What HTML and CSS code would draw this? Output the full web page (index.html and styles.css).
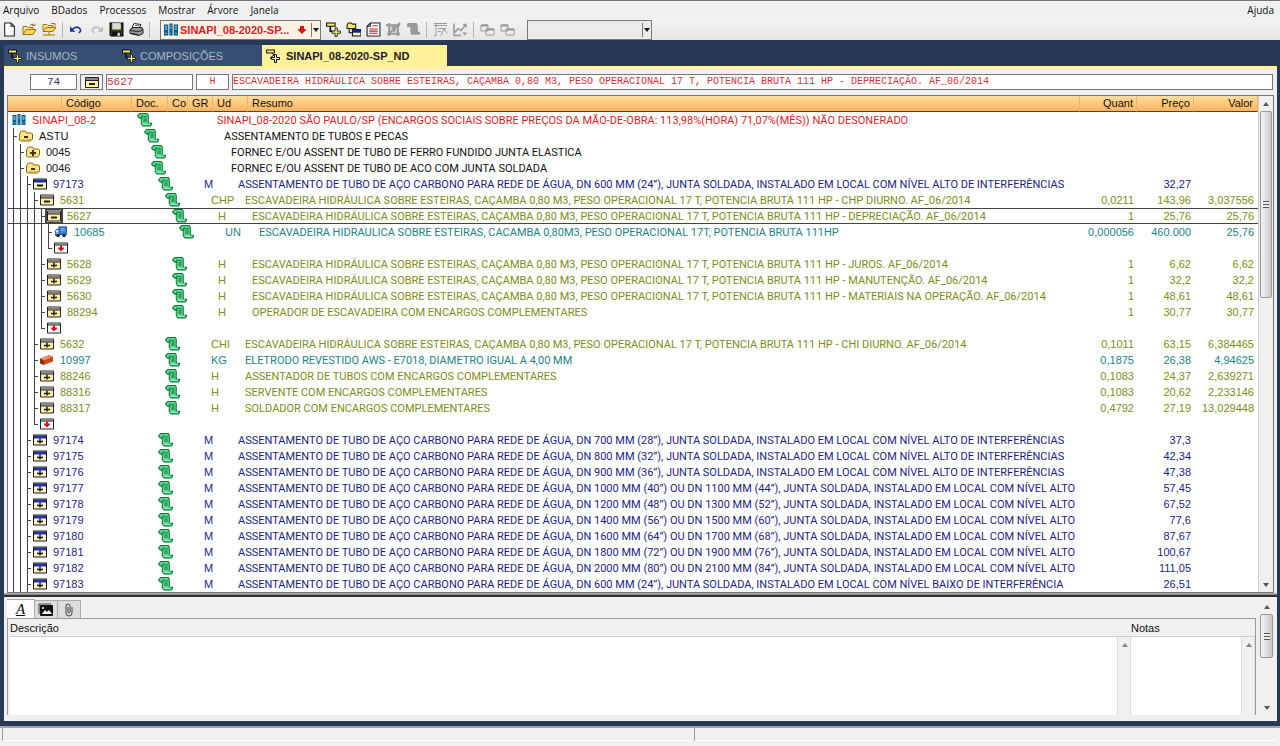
FILE: index.html
```html
<!DOCTYPE html>
<html lang="pt-BR">
<head>
<meta charset="utf-8">
<title>SINAPI_08-2020-SP_ND</title>
<link rel="stylesheet" href="styles.css">
</head>
<body>
<svg class="defs" aria-hidden="true">
  <symbol id="i-doc" viewBox="0 0 14 13"><path d="M2.500.5h7l1 1.500v7.500h3v1l-1 1.500H5.500l-1.500-2V4.500h-2L.5 2.500z" fill="#58d68c" stroke="#0f7a40"/><path d="M3 4.500h1.500L5 2" stroke="#0f7a40" fill="none"/><path d="M6 3.500h3M6 5.500h3M6 7.500h3" stroke="#0c6a36" fill="none"/><path d="M5 10.500h7" stroke="#a6f0c4" fill="none"/></symbol>
  <symbol id="i-books" viewBox="0 0 13 12"><path d="M0 1h4v10H0zM5 0h3v11H5zM9 1h4v10H9z" fill="#0b5f8c"/><path d="M1 3h2M1 5h2M6 2h1M6 4h1M10 3h2M10 5h2" stroke="#bfeaff"/><path d="M1 9h2M6 9h1M10 9h2" stroke="#4fc3f0"/></symbol>
  <symbol id="i-folder-minus" viewBox="0 0 14 12"><path d="M.5 4l2-3h4l1 2h5l1 1v5l-2 2h-10l-1-1z" fill="#ffe58a" stroke="#8a6a10"/><path d="M2 10h9l1-1" stroke="#c99b2c" fill="none"/><path d="M5 7h4" stroke="#4a2d00" stroke-width="2"/></symbol>
  <symbol id="i-folder-plus" viewBox="0 0 14 12"><path d="M.5 4l2-3h4l1 2h5l1 1v5l-2 2h-10l-1-1z" fill="#ffe58a" stroke="#8a6a10"/><path d="M4 7h6M7 4v6" stroke="#4a2d00" stroke-width="2"/></symbol>
  <symbol id="i-navy-minus" viewBox="0 0 14 11"><path d="M.5.5h13v10H.5z" fill="#fff3c4" stroke="#111"/><path d="M1 1h12v3H1z" fill="#1c2fa0"/><path d="M4 7h6" stroke="#111" stroke-width="2"/></symbol>
  <symbol id="i-navy-plus" viewBox="0 0 14 11"><path d="M.5.5h13v10H.5z" fill="#fff3c4" stroke="#111"/><path d="M1 1h12v3H1z" fill="#1c2fa0"/><path d="M4 7h6M7 4v5" stroke="#111" stroke-width="1.500"/></symbol>
  <symbol id="i-box-minus" viewBox="0 0 14 11"><path d="M.5.5h13v10H.5z" fill="#fff0a8" stroke="#222"/><path d="M1 1h12v2H1z" fill="#888"/><path d="M1 3.500h12" stroke="#222"/><path d="M4 7h6" stroke="#222" stroke-width="2"/></symbol>
  <symbol id="i-box-plus" viewBox="0 0 14 11"><path d="M.5.5h13v10H.5z" fill="#fff0a8" stroke="#222"/><path d="M1 1h12v2H1z" fill="#888"/><path d="M1 3.500h12" stroke="#222"/><path d="M4 7h6M7 4v5" stroke="#222" stroke-width="1.500"/></symbol>
  <symbol id="i-end" viewBox="0 0 14 11"><path d="M.5.5h13v10H.5z" fill="#fff" stroke="#222"/><path d="M1 1h12v1H1z" fill="#888"/><path d="M1 2.500h12" stroke="#222"/><path d="M4 5h2V3h2v2h2v1L7 9 4 6z" fill="#e01010"/></symbol>
  <symbol id="i-truck" viewBox="0 0 15 14"><path d="M5 1h9v9H5z" fill="#3c7fd6" stroke="#1c468c"/><path d="M1 6l1-2h4v7H1z" fill="#74aef2" stroke="#1c468c"/><path d="M2 5h2v2H2z" fill="#e6f3ff"/><circle cx="4" cy="11" r="2" fill="#222"/><circle cx="11" cy="11" r="2" fill="#222"/><path d="M7 3h5M7 5h5" stroke="#8ebdf5"/></symbol>
  <symbol id="i-brick" viewBox="0 0 15 13"><path d="M0 5l10-4 4 2v5L4 12l-4-2z" fill="#c94a22"/><path d="M0 5l10-4 4 2-10 4z" fill="#f08a60"/><path d="M0 5l4 2v5l-4-2z" fill="#8c2b10"/></symbol>
  <symbol id="i-treeplus" viewBox="0 0 14 14"><path d="M.5 1h8v3h-8z" fill="#f8e860" stroke="#111"/><path d="M4 4v4.500h2" stroke="#111" fill="none" stroke-width="1.500"/><path d="M8.500 5.500h2v3h3v2h-3v3h-2v-3h-3v-2h3z" fill="#f8ee70" stroke="#111" stroke-width=".8"/></symbol>
  <symbol id="i-treeplus2" viewBox="0 0 14 14"><path d="M.5 1h8v3h-8z" fill="#f8e860" stroke="#111"/><path d="M6 4l2 2-4 3h3" stroke="#111" fill="none"/><path d="M8.500 5.500h2v3h3v2h-3v3h-2v-3h-3v-2h3z" fill="#fff7b0" stroke="#111"/></symbol>
  <symbol id="i-new" viewBox="0 0 14 14"><path d="M2.500 1h6l3 3v9h-9z" fill="#fff" stroke="#222"/><path d="M8.500 1v3h3" fill="none" stroke="#222"/></symbol>
  <symbol id="i-open" viewBox="0 0 15 14"><path d="M1 12V4h4l1 1h5v2" fill="#ffe68c" stroke="#9a7415"/><path d="M1 12l3-5h10l-3 5z" fill="#ffd75a" stroke="#9a7415"/><path d="M8 3q2-3 4 0m1-2v2h-3" fill="none" stroke="#9a7415"/></symbol>
  <symbol id="i-opentree" viewBox="0 0 15 14"><path d="M1 8V2h4l1 1h5v2" fill="#ffe68c" stroke="#9a7415"/><path d="M1 9l3-4h10l-3 4z" fill="#ffd75a" stroke="#9a7415"/><path d="M9 1h4v3" fill="none" stroke="#d0622c"/><path d="M7 9v3M1 12.500h12" stroke="#c49a20" stroke-width="1.500"/></symbol>
  <symbol id="i-undo" viewBox="0 0 14 14"><path d="M3 7q4-4 7-1 2 3-1 4" fill="none" stroke="#1d2e9c" stroke-width="1.500"/><path d="M1 4v5h5z" fill="#1d2e9c"/></symbol>
  <symbol id="i-redo" viewBox="0 0 14 14"><path d="M11 7Q7 3 4 6q-2 3 1 4" fill="none" stroke="#bbb" stroke-width="1.500"/><path d="M13 4v5H8z" fill="#bbb"/></symbol>
  <symbol id="i-save" viewBox="0 0 14 14"><path d="M1 1h12v12H2l-1-1z" fill="#333a1c" stroke="#000"/><path d="M3 1h8v6H3z" fill="#dcdcd4"/><path d="M3 9h8v4H3z" fill="#111"/><path d="M8 10h2v3H8z" fill="#eee"/></symbol>
  <symbol id="i-print" viewBox="0 0 15 14"><path d="M5 1l7 1-2 4-7-1z" fill="#fff" stroke="#222"/><path d="M1 7l3-2h9l1 2v4l-4 2-9-2z" fill="#9a9a9a" stroke="#222"/><path d="M1 8l9 1 4-2M3 11l6 1" stroke="#222" fill="none"/><path d="M6 3h4" stroke="#666"/></symbol>
  <symbol id="i-folders" viewBox="0 0 14 14"><path d="M1 3l1-2h3l1 1h3v4H1z" fill="#f8e860" stroke="#222"/><path d="M3 6v4h3M6 7h8v6H6z" fill="#fff3a8" stroke="#111"/><path d="M6 7h8v3H6z" fill="#12238c"/></symbol>
  <symbol id="i-sheet" viewBox="0 0 14 14"><path d="M4 1h9v12H1V4z" fill="#fff" stroke="#222"/><path d="M4 1v3H1" fill="none" stroke="#222"/><path d="M6 3.500h5M3 6.500h8M3 8.500h8M3 10.500h8" stroke="#c02030"/></symbol>
  <symbol id="i-crop" viewBox="0 0 14 14"><path d="M0 3h13M3 1v12M1 11h12M11 3v10" stroke="#999" stroke-width="2"/><path d="M3 11L13 1M5 5h3v4" stroke="#999" stroke-width="2" fill="none"/></symbol>
  <symbol id="i-scrollg" viewBox="0 0 14 14"><path d="M2 1h8l1 2v6h2v3H5l-1-2V5H1V2z" fill="#999"/></symbol>
  <symbol id="i-list" viewBox="0 0 15 14"><path d="M1 1h13M1 3h13M3 1v12M1 13h2M5 6h8M5 9h3M8 13l3-7 3 5" stroke="#999" fill="none"/></symbol>
  <symbol id="i-chart" viewBox="0 0 15 14"><path d="M1 1v12h7M2 10l3-4 3 2 5-6m-3 0h3v3" stroke="#999" stroke-width="1.500" fill="none"/><path d="M9 10h5l-2 3z" fill="#999"/></symbol>
  <symbol id="i-wins" viewBox="0 0 15 14"><path d="M1 2.500h7v6H1zM6 6.500h8v6H6z" fill="#eee" stroke="#999"/><path d="M1 3h7M6 7h8" stroke="#999" stroke-width="2"/></symbol>
  <symbol id="i-down" viewBox="0 0 8 8"><path d="M1 2h6L4 6z" fill="#111"/></symbol>
  <symbol id="i-up" viewBox="0 0 8 8"><path d="M1 6h6L4 2z" fill="#555"/></symbol>
  <symbol id="i-dn" viewBox="0 0 8 8"><path d="M1 2h6L4 6z" fill="#555"/></symbol>
  <symbol id="i-redarrow" viewBox="0 0 8 10"><path d="M2 1h4v3h2v1L4 9 0 5V4h2z" fill="#d81818"/></symbol>
  <symbol id="i-pic" viewBox="0 0 16 14"><path d="M1 11V1h12" fill="none" stroke="#444"/><rect x="2" y="2" width="13" height="11" rx="1" fill="#111"/><path d="M4 11l3-4 2 2 2-2 3 4z" fill="#fff"/><circle cx="5" cy="5" r="1" fill="#fff"/></symbol>
  <symbol id="i-clip" viewBox="0 0 10 14"><path d="M8 4v6q0 3-3 3t-3-3V3q0-2 2-2t2 2v6q0 1-1 1T4 9V4" fill="none" stroke="#444"/></symbol>
</svg>

<nav class="menubar">
  <button>Arquivo</button><button>BDados</button><button>Processos</button><button>Mostrar</button><button>Árvore</button><button>Janela</button>
  <button class="help">Ajuda</button>
</nav>

<div class="toolbar">
  <button aria-label="Novo"><svg><use href="#i-new"/></svg></button>
  <button aria-label="Abrir"><svg><use href="#i-open"/></svg></button>
  <button aria-label="Abrir base"><svg><use href="#i-opentree"/></svg></button>
  <i class="sep"></i>
  <button aria-label="Desfazer"><svg><use href="#i-undo"/></svg></button>
  <button aria-label="Refazer"><svg><use href="#i-redo"/></svg></button>
  <button aria-label="Salvar"><svg><use href="#i-save"/></svg></button>
  <button aria-label="Imprimir"><svg><use href="#i-print"/></svg></button>
  <i class="sep"></i>
  <div class="combo combo-db">
    <svg><use href="#i-books"/></svg>
    <select aria-label="Base de dados"><option>SINAPI_08-2020-SP...</option></select>
    <svg class="redmark"><use href="#i-redarrow"/></svg>
    <span class="caret"><svg><use href="#i-down"/></svg></span>
  </div>
  <button aria-label="Inserir"><svg><use href="#i-treeplus"/></svg></button>
  <button aria-label="Conceitos"><svg><use href="#i-folders"/></svg></button>
  <button aria-label="Folha"><svg><use href="#i-sheet"/></svg></button>
  <button aria-label="Medição"><svg><use href="#i-crop"/></svg></button>
  <button aria-label="Texto"><svg><use href="#i-scrollg"/></svg></button>
  <i class="sep"></i>
  <button aria-label="Lista"><svg><use href="#i-list"/></svg></button>
  <button aria-label="Gráfico"><svg><use href="#i-chart"/></svg></button>
  <i class="sep"></i>
  <button aria-label="Janela anterior"><svg><use href="#i-wins"/></svg></button>
  <button aria-label="Janela seguinte"><svg><use href="#i-wins"/></svg></button>
  <div class="combo combo-view">
    <select aria-label="Vista"><option></option></select>
    <span class="caret"><svg><use href="#i-down"/></svg></span>
  </div>
</div>

<main class="frame">
  <div class="tabs">
    <button class="tab tab-a"><svg><use href="#i-treeplus"/></svg>INSUMOS</button>
    <button class="tab tab-b"><svg><use href="#i-treeplus"/></svg>COMPOSIÇÕES</button>
    <button class="tab tab-on"><svg><use href="#i-treeplus2"/></svg>SINAPI_08-2020-SP_ND</button>
  </div>

  <div class="panel">
    <div class="fields">
      <input class="f-num" aria-label="Linha" value="74">
      <button class="f-btn" aria-label="Recolher"><svg><use href="#i-box-minus"/></svg></button>
      <input class="f-code" aria-label="Código" value="5627">
      <input class="f-unit" aria-label="Unidade" value="H">
      <input class="f-text" aria-label="Resumo" value="ESCAVADEIRA HIDRÁULICA SOBRE ESTEIRAS, CAÇAMBA 0,80 M3, PESO OPERACIONAL 17 T, POTENCIA BRUTA 111 HP - DEPRECIAÇÃO. AF_06/2014">
    </div>

    <div class="grid">
      <div class="grid-view">
      <table>
        <colgroup><col class="c1"><col class="c2"><col class="c3"><col class="c4"><col class="c5"><col class="c6"><col><col class="c8"><col class="c9"><col class="c10"></colgroup>
        <thead><tr><th></th><th>Código</th><th>Doc.</th><th>Co</th><th>GR</th><th>Ud</th><th>Resumo</th><th class="num">Quant</th><th class="num">Preço</th><th class="num">Valor</th></tr></thead>
        <tbody>
<tr class="d0 red"><td colspan="2"><div class="tree"><svg><use href="#i-books"/></svg>SINAPI_08-2</div></td><td><svg class="doc"><use href="#i-doc"/></svg></td><td colspan="2"></td><td colspan="2" class="res">SINAPI_08-2020 SÃO PAULO/SP (ENCARGOS SOCIAIS SOBRE PREÇOS DA MÃO-DE-OBRA: 113,98%(HORA) 71,07%(MÊS)) NÃO DESONERADO</td><td></td><td></td><td></td></tr>
<tr class="d1"><td colspan="2"><div class="tree"><i class="t"></i><svg><use href="#i-folder-minus"/></svg>ASTU</div></td><td><svg class="doc"><use href="#i-doc"/></svg></td><td colspan="2"></td><td colspan="2" class="res">ASSENTAMENTO DE TUBOS E PECAS</td><td></td><td></td><td></td></tr>
<tr class="d2"><td colspan="2"><div class="tree"><i></i><i class="t"></i><svg><use href="#i-folder-plus"/></svg>0045</div></td><td><svg class="doc"><use href="#i-doc"/></svg></td><td colspan="2"></td><td colspan="2" class="res">FORNEC E/OU ASSENT DE TUBO DE FERRO FUNDIDO JUNTA ELASTICA</td><td></td><td></td><td></td></tr>
<tr class="d2"><td colspan="2"><div class="tree"><i></i><i class="t"></i><svg><use href="#i-folder-minus"/></svg>0046</div></td><td><svg class="doc"><use href="#i-doc"/></svg></td><td colspan="2"></td><td colspan="2" class="res">FORNEC E/OU ASSENT DE TUBO DE ACO COM JUNTA SOLDADA</td><td></td><td></td><td></td></tr>
<tr class="d3 navy"><td colspan="2"><div class="tree"><i></i><i></i><i class="t"></i><svg><use href="#i-navy-minus"/></svg>97173</div></td><td><svg class="doc"><use href="#i-doc"/></svg></td><td colspan="2"><span class="ud">M</span></td><td colspan="2" class="res">ASSENTAMENTO DE TUBO DE AÇO CARBONO PARA REDE DE ÁGUA, DN 600 MM (24”), JUNTA SOLDADA, INSTALADO EM LOCAL COM NÍVEL ALTO DE INTERFERÊNCIAS</td><td></td><td class="num">32,27</td><td></td></tr>
<tr class="d4 olive"><td colspan="2"><div class="tree"><i></i><i></i><i></i><i class="t"></i><svg><use href="#i-box-minus"/></svg>5631</div></td><td><svg class="doc"><use href="#i-doc"/></svg></td><td colspan="2"><span class="ud">CHP</span></td><td colspan="2" class="res">ESCAVADEIRA HIDRÁULICA SOBRE ESTEIRAS, CAÇAMBA 0,80 M3, PESO OPERACIONAL 17 T, POTENCIA BRUTA 111 HP - CHP DIURNO. AF_06/2014</td><td class="num">0,0211</td><td class="num">143,96</td><td class="num">3,037556</td></tr>
<tr class="d5 olive current"><td colspan="2"><div class="tree"><i></i><i></i><i></i><i></i><i class="t"></i><svg><use href="#i-box-minus"/></svg>5627</div></td><td><svg class="doc"><use href="#i-doc"/></svg></td><td colspan="2"><span class="ud">H</span></td><td colspan="2" class="res">ESCAVADEIRA HIDRÁULICA SOBRE ESTEIRAS, CAÇAMBA 0,80 M3, PESO OPERACIONAL 17 T, POTENCIA BRUTA 111 HP - DEPRECIAÇÃO. AF_06/2014</td><td class="num">1</td><td class="num">25,76</td><td class="num">25,76</td></tr>
<tr class="d6 teal"><td colspan="2"><div class="tree"><i></i><i></i><i></i><i></i><i></i><i class="t"></i><svg><use href="#i-truck"/></svg>10685</div></td><td><svg class="doc"><use href="#i-doc"/></svg></td><td colspan="2"><span class="ud">UN</span></td><td colspan="2" class="res">ESCAVADEIRA HIDRAULICA SOBRE ESTEIRAS, CACAMBA 0,80M3, PESO OPERACIONAL 17T, POTENCIA BRUTA 111HP</td><td class="num">0,000056</td><td class="num">460.000</td><td class="num">25,76</td></tr>
<tr><td colspan="2"><div class="tree"><i></i><i></i><i></i><i></i><i></i><i class="t e"></i><svg><use href="#i-end"/></svg></div></td><td></td><td colspan="2"></td><td colspan="2"></td><td></td><td></td><td></td></tr>
<tr class="d5 olive"><td colspan="2"><div class="tree"><i></i><i></i><i></i><i></i><i class="t"></i><svg><use href="#i-box-plus"/></svg>5628</div></td><td><svg class="doc"><use href="#i-doc"/></svg></td><td colspan="2"><span class="ud">H</span></td><td colspan="2" class="res">ESCAVADEIRA HIDRÁULICA SOBRE ESTEIRAS, CAÇAMBA 0,80 M3, PESO OPERACIONAL 17 T, POTENCIA BRUTA 111 HP - JUROS. AF_06/2014</td><td class="num">1</td><td class="num">6,62</td><td class="num">6,62</td></tr>
<tr class="d5 olive"><td colspan="2"><div class="tree"><i></i><i></i><i></i><i></i><i class="t"></i><svg><use href="#i-box-plus"/></svg>5629</div></td><td><svg class="doc"><use href="#i-doc"/></svg></td><td colspan="2"><span class="ud">H</span></td><td colspan="2" class="res">ESCAVADEIRA HIDRÁULICA SOBRE ESTEIRAS, CAÇAMBA 0,80 M3, PESO OPERACIONAL 17 T, POTENCIA BRUTA 111 HP - MANUTENÇÃO. AF_06/2014</td><td class="num">1</td><td class="num">32,2</td><td class="num">32,2</td></tr>
<tr class="d5 olive"><td colspan="2"><div class="tree"><i></i><i></i><i></i><i></i><i class="t"></i><svg><use href="#i-box-plus"/></svg>5630</div></td><td><svg class="doc"><use href="#i-doc"/></svg></td><td colspan="2"><span class="ud">H</span></td><td colspan="2" class="res">ESCAVADEIRA HIDRÁULICA SOBRE ESTEIRAS, CAÇAMBA 0,80 M3, PESO OPERACIONAL 17 T, POTENCIA BRUTA 111 HP - MATERIAIS NA OPERAÇÃO. AF_06/2014</td><td class="num">1</td><td class="num">48,61</td><td class="num">48,61</td></tr>
<tr class="d5 olive"><td colspan="2"><div class="tree"><i></i><i></i><i></i><i></i><i class="t"></i><svg><use href="#i-box-plus"/></svg>88294</div></td><td><svg class="doc"><use href="#i-doc"/></svg></td><td colspan="2"><span class="ud">H</span></td><td colspan="2" class="res">OPERADOR DE ESCAVADEIRA COM ENCARGOS COMPLEMENTARES</td><td class="num">1</td><td class="num">30,77</td><td class="num">30,77</td></tr>
<tr><td colspan="2"><div class="tree"><i></i><i></i><i></i><i></i><i class="t e"></i><svg><use href="#i-end"/></svg></div></td><td></td><td colspan="2"></td><td colspan="2"></td><td></td><td></td><td></td></tr>
<tr class="d4 olive"><td colspan="2"><div class="tree"><i></i><i></i><i></i><i class="t"></i><svg><use href="#i-box-plus"/></svg>5632</div></td><td><svg class="doc"><use href="#i-doc"/></svg></td><td colspan="2"><span class="ud">CHI</span></td><td colspan="2" class="res">ESCAVADEIRA HIDRÁULICA SOBRE ESTEIRAS, CAÇAMBA 0,80 M3, PESO OPERACIONAL 17 T, POTENCIA BRUTA 111 HP - CHI DIURNO. AF_06/2014</td><td class="num">0,1011</td><td class="num">63,15</td><td class="num">6,384465</td></tr>
<tr class="d4 teal"><td colspan="2"><div class="tree"><i></i><i></i><i></i><i class="t"></i><svg><use href="#i-brick"/></svg>10997</div></td><td><svg class="doc"><use href="#i-doc"/></svg></td><td colspan="2"><span class="ud">KG</span></td><td colspan="2" class="res">ELETRODO REVESTIDO AWS - E7018, DIAMETRO IGUAL A 4,00 MM</td><td class="num">0,1875</td><td class="num">26,38</td><td class="num">4,94625</td></tr>
<tr class="d4 olive"><td colspan="2"><div class="tree"><i></i><i></i><i></i><i class="t"></i><svg><use href="#i-box-plus"/></svg>88246</div></td><td><svg class="doc"><use href="#i-doc"/></svg></td><td colspan="2"><span class="ud">H</span></td><td colspan="2" class="res">ASSENTADOR DE TUBOS COM ENCARGOS COMPLEMENTARES</td><td class="num">0,1083</td><td class="num">24,37</td><td class="num">2,639271</td></tr>
<tr class="d4 olive"><td colspan="2"><div class="tree"><i></i><i></i><i></i><i class="t"></i><svg><use href="#i-box-plus"/></svg>88316</div></td><td><svg class="doc"><use href="#i-doc"/></svg></td><td colspan="2"><span class="ud">H</span></td><td colspan="2" class="res">SERVENTE COM ENCARGOS COMPLEMENTARES</td><td class="num">0,1083</td><td class="num">20,62</td><td class="num">2,233146</td></tr>
<tr class="d4 olive"><td colspan="2"><div class="tree"><i></i><i></i><i></i><i class="t"></i><svg><use href="#i-box-plus"/></svg>88317</div></td><td><svg class="doc"><use href="#i-doc"/></svg></td><td colspan="2"><span class="ud">H</span></td><td colspan="2" class="res">SOLDADOR COM ENCARGOS COMPLEMENTARES</td><td class="num">0,4792</td><td class="num">27,19</td><td class="num">13,029448</td></tr>
<tr><td colspan="2"><div class="tree"><i></i><i></i><i></i><i class="t e"></i><svg><use href="#i-end"/></svg></div></td><td></td><td colspan="2"></td><td colspan="2"></td><td></td><td></td><td></td></tr>
<tr class="d3 navy"><td colspan="2"><div class="tree"><i></i><i></i><i class="t"></i><svg><use href="#i-navy-plus"/></svg>97174</div></td><td><svg class="doc"><use href="#i-doc"/></svg></td><td colspan="2"><span class="ud">M</span></td><td colspan="2" class="res">ASSENTAMENTO DE TUBO DE AÇO CARBONO PARA REDE DE ÁGUA, DN 700 MM (28’’), JUNTA SOLDADA, INSTALADO EM LOCAL COM NÍVEL ALTO DE INTERFERÊNCIAS</td><td></td><td class="num">37,3</td><td></td></tr>
<tr class="d3 navy"><td colspan="2"><div class="tree"><i></i><i></i><i class="t"></i><svg><use href="#i-navy-plus"/></svg>97175</div></td><td><svg class="doc"><use href="#i-doc"/></svg></td><td colspan="2"><span class="ud">M</span></td><td colspan="2" class="res">ASSENTAMENTO DE TUBO DE AÇO CARBONO PARA REDE DE ÁGUA, DN 800 MM (32’’), JUNTA SOLDADA, INSTALADO EM LOCAL COM NÍVEL ALTO DE INTERFERÊNCIAS</td><td></td><td class="num">42,34</td><td></td></tr>
<tr class="d3 navy"><td colspan="2"><div class="tree"><i></i><i></i><i class="t"></i><svg><use href="#i-navy-plus"/></svg>97176</div></td><td><svg class="doc"><use href="#i-doc"/></svg></td><td colspan="2"><span class="ud">M</span></td><td colspan="2" class="res">ASSENTAMENTO DE TUBO DE AÇO CARBONO PARA REDE DE ÁGUA, DN 900 MM (36’’), JUNTA SOLDADA, INSTALADO EM LOCAL COM NÍVEL ALTO DE INTERFERÊNCIAS</td><td></td><td class="num">47,38</td><td></td></tr>
<tr class="d3 navy"><td colspan="2"><div class="tree"><i></i><i></i><i class="t"></i><svg><use href="#i-navy-plus"/></svg>97177</div></td><td><svg class="doc"><use href="#i-doc"/></svg></td><td colspan="2"><span class="ud">M</span></td><td colspan="2" class="res">ASSENTAMENTO DE TUBO DE AÇO CARBONO PARA REDE DE ÁGUA, DN 1000 MM (40’’) OU DN 1100 MM (44’’), JUNTA SOLDADA, INSTALADO EM LOCAL COM NÍVEL ALTO</td><td></td><td class="num">57,45</td><td></td></tr>
<tr class="d3 navy"><td colspan="2"><div class="tree"><i></i><i></i><i class="t"></i><svg><use href="#i-navy-plus"/></svg>97178</div></td><td><svg class="doc"><use href="#i-doc"/></svg></td><td colspan="2"><span class="ud">M</span></td><td colspan="2" class="res">ASSENTAMENTO DE TUBO DE AÇO CARBONO PARA REDE DE ÁGUA, DN 1200 MM (48’’) OU DN 1300 MM (52’’), JUNTA SOLDADA, INSTALADO EM LOCAL COM NÍVEL ALTO</td><td></td><td class="num">67,52</td><td></td></tr>
<tr class="d3 navy"><td colspan="2"><div class="tree"><i></i><i></i><i class="t"></i><svg><use href="#i-navy-plus"/></svg>97179</div></td><td><svg class="doc"><use href="#i-doc"/></svg></td><td colspan="2"><span class="ud">M</span></td><td colspan="2" class="res">ASSENTAMENTO DE TUBO DE AÇO CARBONO PARA REDE DE ÁGUA, DN 1400 MM (56’’) OU DN 1500 MM (60’’), JUNTA SOLDADA, INSTALADO EM LOCAL COM NÍVEL ALTO</td><td></td><td class="num">77,6</td><td></td></tr>
<tr class="d3 navy"><td colspan="2"><div class="tree"><i></i><i></i><i class="t"></i><svg><use href="#i-navy-plus"/></svg>97180</div></td><td><svg class="doc"><use href="#i-doc"/></svg></td><td colspan="2"><span class="ud">M</span></td><td colspan="2" class="res">ASSENTAMENTO DE TUBO DE AÇO CARBONO PARA REDE DE ÁGUA, DN 1600 MM (64’’) OU DN 1700 MM (68’’), JUNTA SOLDADA, INSTALADO EM LOCAL COM NÍVEL ALTO</td><td></td><td class="num">87,67</td><td></td></tr>
<tr class="d3 navy"><td colspan="2"><div class="tree"><i></i><i></i><i class="t"></i><svg><use href="#i-navy-plus"/></svg>97181</div></td><td><svg class="doc"><use href="#i-doc"/></svg></td><td colspan="2"><span class="ud">M</span></td><td colspan="2" class="res">ASSENTAMENTO DE TUBO DE AÇO CARBONO PARA REDE DE ÁGUA, DN 1800 MM (72’’) OU DN 1900 MM (76’’), JUNTA SOLDADA, INSTALADO EM LOCAL COM NÍVEL ALTO</td><td></td><td class="num">100,67</td><td></td></tr>
<tr class="d3 navy"><td colspan="2"><div class="tree"><i></i><i></i><i class="t"></i><svg><use href="#i-navy-plus"/></svg>97182</div></td><td><svg class="doc"><use href="#i-doc"/></svg></td><td colspan="2"><span class="ud">M</span></td><td colspan="2" class="res">ASSENTAMENTO DE TUBO DE AÇO CARBONO PARA REDE DE ÁGUA, DN 2000 MM (80’’) OU DN 2100 MM (84’’), JUNTA SOLDADA, INSTALADO EM LOCAL COM NÍVEL ALTO</td><td></td><td class="num">111,05</td><td></td></tr>
<tr class="d3 navy"><td colspan="2"><div class="tree"><i></i><i></i><i class="t"></i><svg><use href="#i-navy-plus"/></svg>97183</div></td><td><svg class="doc"><use href="#i-doc"/></svg></td><td colspan="2"><span class="ud">M</span></td><td colspan="2" class="res">ASSENTAMENTO DE TUBO DE AÇO CARBONO PARA REDE DE ÁGUA, DN 600 MM (24’’), JUNTA SOLDADA, INSTALADO EM LOCAL COM NÍVEL BAIXO DE INTERFERÊNCIA</td><td></td><td class="num">26,51</td><td></td></tr>
        </tbody>
      </table>
      </div>
      <div class="vbar">
        <button aria-label="Subir"><svg><use href="#i-up"/></svg></button>
        <div class="thumb thumb-grid"><i></i></div>
        <button class="end" aria-label="Descer"><svg><use href="#i-dn"/></svg></button>
      </div>
    </div>

    <div class="splitter"></div>

    <div class="detail">
      <div class="detail-main">
        <div class="dtabs">
          <button class="dt-on" aria-label="Texto"><u>A</u></button>
          <button aria-label="Imagem"><svg class="pic"><use href="#i-pic"/></svg></button>
          <button aria-label="Anexos"><svg class="clip"><use href="#i-clip"/></svg></button>
        </div>
        <div class="notes">
          <div class="note note-a">
            <label for="desc">Descrição</label>
            <div class="box"><textarea id="desc"></textarea><div class="mini"><svg><use href="#i-up"/></svg></div></div>
          </div>
          <div class="note note-b">
            <label for="notas">Notas</label>
            <div class="box"><textarea id="notas"></textarea><div class="mini"><svg><use href="#i-up"/></svg></div></div>
          </div>
        </div>
      </div>
      <div class="vbar vbar-detail">
        <button aria-label="Subir"><svg><use href="#i-up"/></svg></button>
        <div class="thumb thumb-detail"><i></i></div>
        <button class="end" aria-label="Descer"><svg><use href="#i-dn"/></svg></button>
      </div>
    </div>
  </div>
</main>

<footer class="status"><div></div><div></div></footer>
</body>
</html>
```
FILE: styles.css
```css
* { box-sizing: border-box; }
body {
  margin: 0; height: 100vh; display: flex; flex-direction: column; overflow: hidden;
  background: #f0f0f0; color: #111; font: 11px/16px "Liberation Sans", Arial, sans-serif;
}
button, input, select, textarea { font: inherit; color: inherit; margin: 0; padding: 0; border: 0; background: none; border-radius: 0; }
button { display: flex; align-items: center; justify-content: center; }
svg { display: block; flex: none; width: 14px; height: 14px; }
.defs { position: absolute; width: 0; height: 0; }

.menubar { display: flex; gap: 12px; height: 19px; padding: 0 6px 0 3px; border-top: 1px solid #77737c; font-family: "Open Sans", sans-serif; font-size: 10px; }
.menubar .help { margin-left: auto; }

.toolbar { display: flex; align-items: center; height: 21px; gap: 4px; padding: 0 1px; background: linear-gradient(#f3f3f3, #e6e6e6); }
.toolbar button { width: 16px; height: 16px; }
.toolbar button svg { width: 15px; height: 15px; }
.toolbar .sep { width: 1px; height: 16px; margin: 0 1px; background: #b4b4b4; }
.combo { display: flex; align-items: center; height: 20px; border: 1px solid #777; }
.combo select { flex: 1; min-width: 0; height: 18px; appearance: none; }
.combo .caret { display: flex; align-items: center; border-left: 1px solid #777; height: 14px; }
.combo .caret svg { width: 8px; height: 8px; }
.combo-db { width: 161px; margin-left: 5px; padding-left: 3px; gap: 2px; background: #fbf1e3; color: #dc1c24; font-weight: bold; }
.combo-db .redmark { width: 8px; height: 10px; margin-right: 3px; }
.combo-view { width: 125px; margin-left: 8px; background: #ececec; }

.frame { flex: 1; min-height: 0; display: flex; flex-direction: column; padding: 5px 3px 5px 4px; background: #293955; }
.tabs { display: flex; height: 21px; }
.tab { justify-content: flex-start; gap: 4px; padding-left: 4px; background: #364e72; color: #a9b6ca; }
.tab-a { width: 114px; }
.tab-b { width: 144px; }
.tab-on { width: 185px; gap: 6px; background: #fff09a; color: #222; font-weight: bold; }

.panel { flex: 1; min-height: 0; display: flex; flex-direction: column; background: #f0f0f0; border-top: 4px solid #fff0a8; }
.fields { display: flex; gap: 3px; padding: 4px 4px 5px 26px; font-family: "Liberation Mono", "Courier New", monospace; font-size: 10px; color: #d2303a; }
.fields > * { height: 16px; border: 1px solid #777; background: #fff; line-height: 16px; }
.f-num { width: 47px; text-align: center; color: #33336a; font-size: 11px; }
.fields .f-btn { width: 23px; background: #f0f0f0; }
.f-btn svg { width: 14px; height: 11px; }
.f-code { width: 87px; font-size: 11px; }
.f-unit { width: 33px; text-align: center; }
.f-text { flex: 1; min-width: 0; }

.grid { flex: 1; min-height: 0; display: flex; margin: 0 3px; border: 1px solid #777; }
.grid-view { flex: 1; min-width: 0; overflow: hidden; background: #fff; }
table { width: 100%; table-layout: fixed; border-collapse: separate; border-spacing: 0; }
.c1 { width: 54px; } .c2 { width: 70px; } .c3 { width: 36px; } .c4 { width: 20px; } .c5 { width: 25px; } .c6 { width: 35px; }
.c8 { width: 57px; } .c9 { width: 57px; } .c10 { width: 64px; }
th { height: 16px; padding: 0 0 0 4px; text-align: left; font-weight: normal; line-height: 15px; background: linear-gradient(#ffdda0, #fcb45c); border-bottom: 1px solid #5a4030; border-right: 1px solid #e9b671; }
td { height: 16px; padding: 0; line-height: 16px; white-space: nowrap; }
th.num, td.num { text-align: right; padding: 0 3px 0 0; }
th:last-child, td.num:last-child { padding-right: 4px; }
.tree { display: flex; align-items: center; height: 16px; padding-left: 4px; }
.tree svg { width: 14px; height: 12px; margin-right: 6px; }
.tree i { width: 7px; height: 16px; background: linear-gradient(#444, #444) 1px 0 / 1px 100% no-repeat; }
.tree i.t { background: linear-gradient(#444, #444) 1px 0 / 1px 100% no-repeat, linear-gradient(#444, #444) 1px 8px / 4px 1px no-repeat; }
.tree i.e { background-size: 1px 8px, 4px 1px; }
.d0 { --in: 0px; } .d1 { --in: 7px; } .d2 { --in: 14px; } .d3 { --in: 21px; } .d4 { --in: 28px; } .d5 { --in: 35px; } .d6 { --in: 42px; }
.doc { width: 15px; height: 14px; margin-left: calc(5px + var(--in)); }
.ud { display: block; margin-left: calc(15px + var(--in)); }
.res { overflow: hidden; padding-top: 1px; padding-left: calc(4px + var(--in)); line-height: 15px; border-right: 2px solid transparent; font-family: Roboto, Arial, sans-serif; }
.red { color: #dc1c24; } .navy { color: #1c1c84; } .olive { color: #808c20; } .teal { color: #1c8484; }
.current td { background: linear-gradient(#444, #444) 0 0 / 100% 1px repeat-x, linear-gradient(#444, #444) 0 100% / 100% 1px repeat-x; }
.current .tree svg { outline: 2px solid #444; }

.vbar { display: flex; flex-direction: column; width: 15px; padding: 0 1px; background: #f0f0f0; border-left: 1px solid #ccc; }
.vbar button { height: 15px; }
.vbar svg { width: 8px; height: 8px; }
.vbar .end { margin-top: auto; }
.thumb { display: flex; align-items: center; justify-content: center; border: 1px solid #999; border-radius: 2px; background: linear-gradient(90deg, #f6f6f6, #c8c8cc); }
.thumb i { width: 6px; height: 7px; background: repeating-linear-gradient(#555 0 1px, #eee 1px 3px); }
.thumb-grid { height: 187px; }
.thumb-detail { height: 44px; }

.splitter { height: 4px; border-bottom: 2px solid #333; border-top: 1px solid #aaa; background: #888; }
.detail { display: flex; height: 124px; padding: 2px 3px 6px 3px; }
.detail-main { flex: 1; min-width: 0; display: flex; flex-direction: column; margin-right: 3px; }
.dtabs { display: flex; align-items: flex-end; height: 19px; }
.dtabs button { width: 23px; height: 18px; background: #ddd; border: 1px solid #aaa; border-bottom: 0; border-left: 0; }
.dtabs .dt-on { width: 28px; height: 19px; background: #fff; font: italic 15px/16px "Liberation Serif", serif; }
.pic { width: 16px; height: 14px; }
.clip { width: 10px; height: 14px; }
.notes { flex: 1; display: flex; border: 1px solid #999; border-bottom: 0; }
.note { display: flex; flex-direction: column; min-width: 0; }
.note-a { flex: 1; padding-left: 2px; }
.note-b { width: 124px; }
.note label { height: 18px; line-height: 18px; border-bottom: 1px solid #ccc; }
.box { flex: 1; display: flex; }
.box textarea { flex: 1; min-width: 0; resize: none; background: #fff; outline: 0; }
.mini { width: 14px; padding: 4px 3px; border-left: 1px solid #ddd; border-right: 1px solid #ddd; }
.mini svg { width: 8px; height: 8px; opacity: .7; }
.vbar-detail { border-left: 0; }

.status { display: flex; gap: 3px; height: 20px; padding: 0 3px 5px 2px; border-top: 2px solid #a0a4aa; }
.status div { flex: 1; border-left: 1px solid #999; border-bottom: 1px solid #fff; }
.status div:first-child { flex: 0 0 54%; }
```
